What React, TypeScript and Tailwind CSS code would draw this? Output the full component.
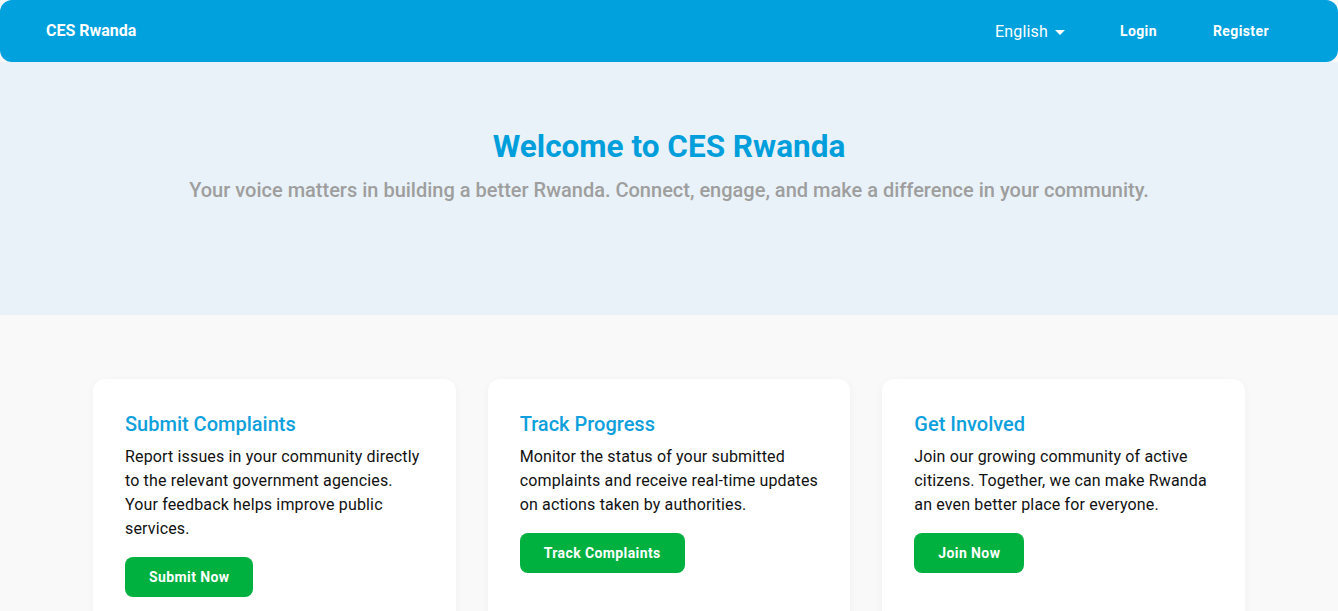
const cards = [
  {
    title: 'Submit Complaints',
    text: 'Report issues in your community directly to the relevant government agencies. Your feedback helps improve public services.',
    action: 'Submit Now',
  },
  {
    title: 'Track Progress',
    text: 'Monitor the status of your submitted complaints and receive real-time updates on actions taken by authorities.',
    action: 'Track Complaints',
  },
  {
    title: 'Get Involved',
    text: 'Join our growing community of active citizens. Together, we can make Rwanda an even better place for everyone.',
    action: 'Join Now',
  },
]

export default function App() {
  return (
    <div className="min-h-screen bg-[#f9f9f9] font-['Roboto',sans-serif]">
      <header className="flex h-[62px] items-center justify-between rounded-xl bg-[#00a1dd] pl-[46px] pr-[41px] text-white">
        <a href="#" className="text-base font-bold">CES Rwanda</a>
        <nav className="flex items-center">
          <button className="mt-[2px] flex items-center gap-[7px] text-base tracking-[0.00938em]">
            English
            <svg width="10" height="5" viewBox="0 0 10 5" className="mt-[1px]">
              <path d="M0 0h10L5 5z" fill="white" />
            </svg>
          </button>
          <a href="#" className="ml-[27px] px-7 text-sm font-bold tracking-[0.02857em]">Login</a>
          <a href="#" className="px-7 text-sm font-bold tracking-[0.02857em]">Register</a>
        </nav>
      </header>

      <section className="h-[253px] bg-[#e9f2f8] pt-[67px] text-center">
        <h1 className="text-[31.5px] font-bold leading-9 text-[#009fdc]">Welcome to CES Rwanda</h1>
        <p className="mt-[11px] text-xl font-medium leading-7 text-[#9e9e9e]">
          Your voice matters in building a better Rwanda. Connect, engage, and make a difference in your community.
        </p>
      </section>

      <section className="pt-16">
        <div className="mx-auto grid max-w-6xl grid-cols-3 gap-8">
          {cards.map((c) => (
            <div key={c.title} className="h-[260px] rounded-xl bg-white px-8 pt-[31px] shadow-[0_2px_10px_rgba(0,0,0,0.04)]">
              <h2 className="text-xl font-medium leading-7 text-[#0ea0dc]">{c.title}</h2>
              <p className="mt-[7px] text-base leading-6 tracking-[0.00938em] text-[#111]">{c.text}</p>
              <button className="mt-4 h-10 rounded-lg bg-[#00b140] px-6 text-sm font-bold tracking-[0.02857em] text-white">
                {c.action}
              </button>
            </div>
          ))}
        </div>
      </section>
    </div>
  )
}
